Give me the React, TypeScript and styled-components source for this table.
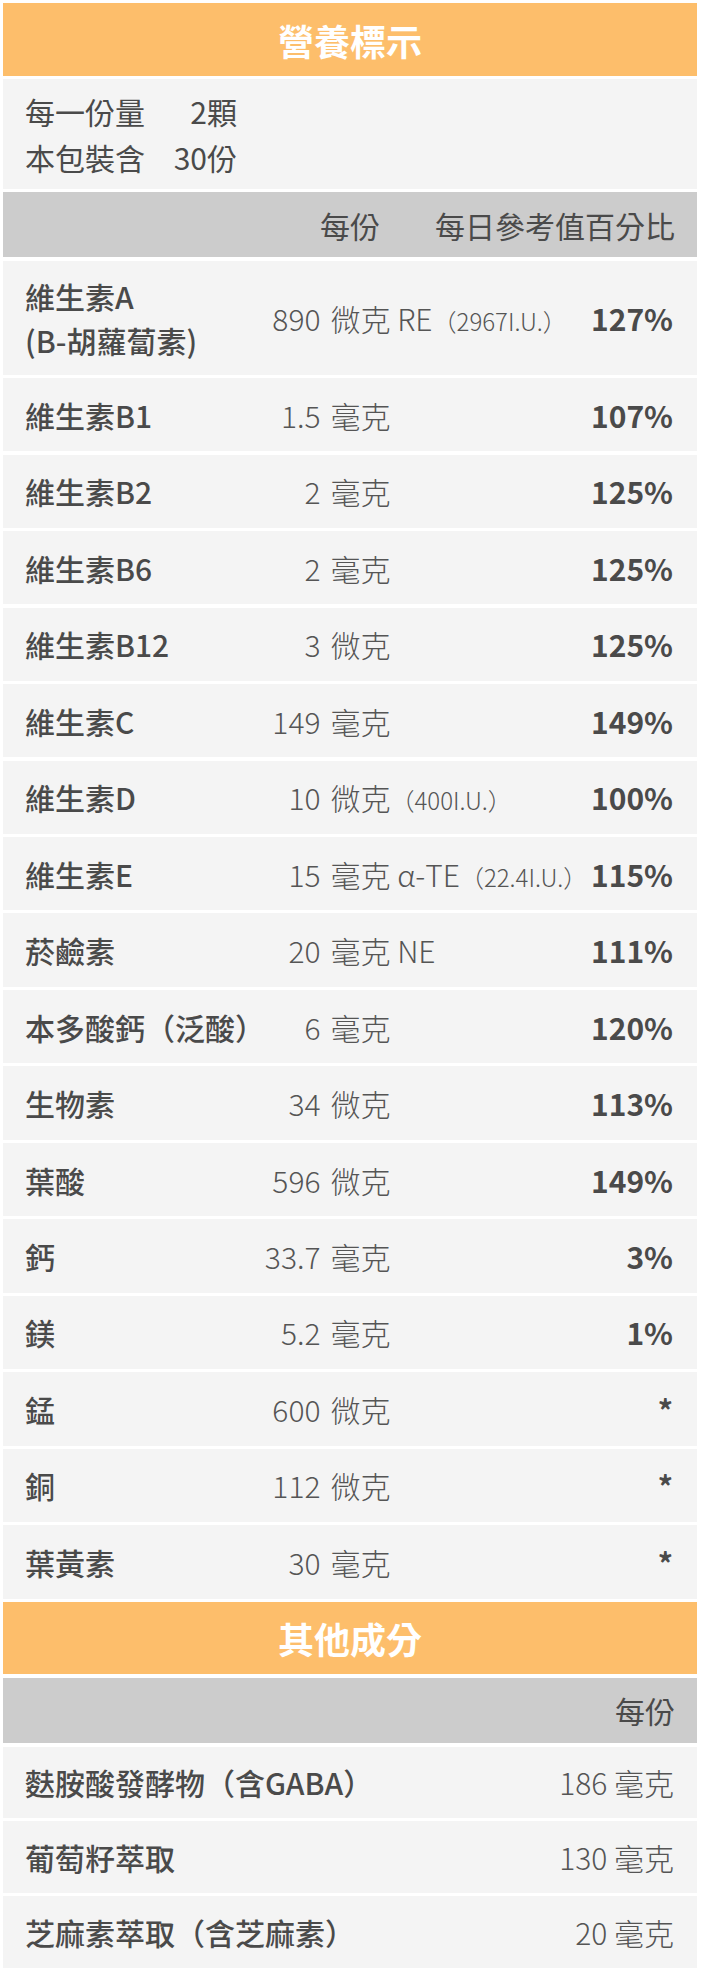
import React from "react";
import styled, { createGlobalStyle } from "styled-components";

const GlobalStyle = createGlobalStyle`
  body {
    margin: 0;
    background: #ffffff;
    font-family: "Noto Sans CJK TC", "Noto Sans CJK SC", "Noto Sans", sans-serif;
    color: #4a4a4a;
  }
`;

type Nutrient = {
  name: React.ReactNode;
  amount: string;
  unit: string;
  note?: string;
  pct: string;
  tall?: boolean;
};

const nutrients: Nutrient[] = [
  { name: <>維生素A<br />(B-胡蘿蔔素)</>, amount: "890", unit: "微克 RE", note: "（2967I.U.）", pct: "127%", tall: true },
  { name: "維生素B1", amount: "1.5", unit: "毫克", pct: "107%" },
  { name: "維生素B2", amount: "2", unit: "毫克", pct: "125%" },
  { name: "維生素B6", amount: "2", unit: "毫克", pct: "125%" },
  { name: "維生素B12", amount: "3", unit: "微克", pct: "125%" },
  { name: "維生素C", amount: "149", unit: "毫克", pct: "149%" },
  { name: "維生素D", amount: "10", unit: "微克", note: "（400I.U.）", pct: "100%" },
  { name: "維生素E", amount: "15", unit: "毫克 α-TE", note: "（22.4I.U.）", pct: "115%" },
  { name: "菸鹼素", amount: "20", unit: "毫克 NE", pct: "111%" },
  { name: "本多酸鈣（泛酸）", amount: "6", unit: "毫克", pct: "120%" },
  { name: "生物素", amount: "34", unit: "微克", pct: "113%" },
  { name: "葉酸", amount: "596", unit: "微克", pct: "149%" },
  { name: "鈣", amount: "33.7", unit: "毫克", pct: "3%" },
  { name: "鎂", amount: "5.2", unit: "毫克", pct: "1%" },
  { name: "錳", amount: "600", unit: "微克", pct: "*" },
  { name: "銅", amount: "112", unit: "微克", pct: "*" },
  { name: "葉黃素", amount: "30", unit: "毫克", pct: "*" },
];

const others = [
  { name: "麩胺酸發酵物（含GABA）", amount: "186 毫克" },
  { name: "葡萄籽萃取", amount: "130 毫克" },
  { name: "芝麻素萃取（含芝麻素）", amount: "20 毫克" },
];

function App() {
  return (
    <Page>
      <GlobalStyle />
      <SectionTitle>營養標示</SectionTitle>

      <ServingInfo>
        <span>每一份量</span>
        <ServingValue>2顆</ServingValue>
        <span>本包裝含</span>
        <ServingValue>30份</ServingValue>
      </ServingInfo>

      <HeaderBar>
        <span>每份</span>
        <span>每日參考值百分比</span>
      </HeaderBar>

      {nutrients.map((n, i) => (
        <NutrientRow key={i} tall={n.tall}>
          <Label>{n.name}</Label>
          <Amount>{n.amount}</Amount>
          <Unit>
            {n.unit}
            {n.note && <Note>{n.note}</Note>}
          </Unit>
          <Percent>{n.pct}</Percent>
        </NutrientRow>
      ))}

      <SectionTitle>其他成分</SectionTitle>

      <HeaderBar>
        <span>每份</span>
      </HeaderBar>

      {others.map((o) => (
        <OtherRow key={o.name}>
          <Label>{o.name}</Label>
          <OtherAmount>{o.amount}</OtherAmount>
        </OtherRow>
      ))}
    </Page>
  );
}

export default App;

const Page = styled.div`
  width: 701px;
  box-sizing: border-box;
  padding: 3.3px 4px 4px 3px;
  display: flex;
  flex-direction: column;
  gap: 3.3px;
`;

const SectionTitle = styled.div`
  height: 72.5px;
  background: #fdbe6b;
  display: flex;
  align-items: center;
  justify-content: center;
  color: #ffffff;
  font-size: 36px;
  font-weight: 700;
`;

const ServingInfo = styled.div`
  height: 109.5px;
  box-sizing: border-box;
  background: #f4f4f4;
  padding: 9px 0 0 22px;
  display: grid;
  grid-template-columns: 120px 92px;
  align-content: start;
  font-size: 30px;
  line-height: 46px;
  color: #4a4a4a;
`;

const ServingValue = styled.span`
  text-align: right;
`;

const HeaderBar = styled.div`
  height: 65.6px;
  background: #cccccc;
  display: flex;
  align-items: center;
  justify-content: flex-end;
  gap: 55px;
  padding-right: 22px;
  font-size: 30px;
  color: #4a4a4a;
`;

const NutrientRow = styled.div<{ tall?: boolean }>`
  height: ${(p) => (p.tall ? "114px" : "73.2px")};
  box-sizing: border-box;
  background: #f4f4f4;
  padding: 0 24px 0 22px;
  display: grid;
  grid-template-columns: 225px 70.5px minmax(0, 1fr) auto;
  align-items: center;
  font-size: 30px;
  color: #4a4a4a;
`;

const Label = styled.div`
  font-weight: 500;
  font-size: 30px;
  line-height: 44px;
  white-space: nowrap;
`;

const Amount = styled.div`
  text-align: right;
  font-weight: 300;
  color: #555555;
`;

const Unit = styled.div`
  padding-left: 10px;
  font-weight: 300;
  color: #555555;
  white-space: nowrap;
`;

const Note = styled.span`
  font-size: 24px;
`;

const Percent = styled.div`
  text-align: right;
  font-weight: 700;
`;

const OtherRow = styled.div`
  height: 71.6px;
  box-sizing: border-box;
  background: #f4f4f4;
  padding: 0 23px 0 22px;
  display: flex;
  align-items: center;
  justify-content: space-between;
  color: #4a4a4a;
`;

const OtherAmount = styled.div`
  font-size: 30px;
  font-weight: 300;
  color: #555555;
`;
